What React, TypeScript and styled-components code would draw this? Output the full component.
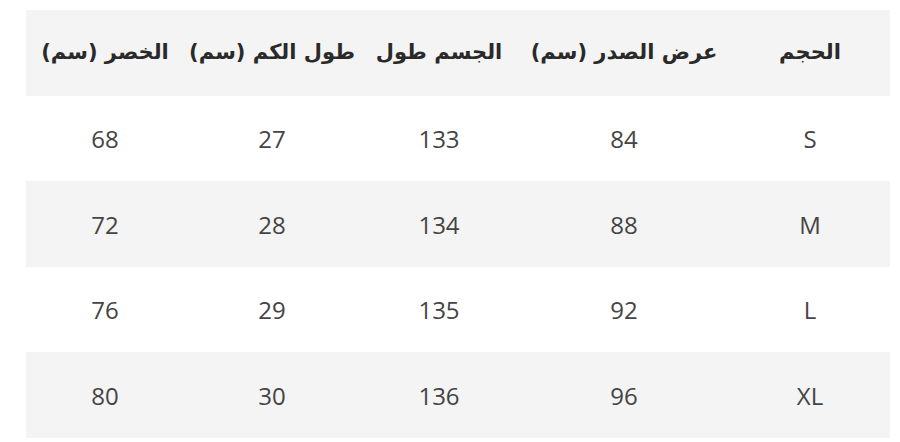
import React from "react";
import styled, { createGlobalStyle } from "styled-components";

const Global = createGlobalStyle`
  html, body { margin: 0; padding: 0; background: #ffffff; }
  body { font-family: "Open Sans", "DejaVu Sans", sans-serif; }
`;

const Page = styled.div`
  padding: 10px 10px 0 26px;
`;

const Table = styled.div`
  direction: rtl;
  width: 864px;
  display: grid;
  grid-template-columns: 160px 212px 158px 176px 158px;
`;

const Row = styled.div<{ $shade: boolean; $h: number }>`
  display: contents;
  & > div {
    background: ${(p) => (p.$shade ? "#f4f4f4" : "#ffffff")};
    height: ${(p) => p.$h}px;
  }
`;

const HeadCell = styled.div`
  display: flex;
  align-items: center;
  justify-content: center;
  font-family: "DejaVu Sans", "Noto Sans", sans-serif;
  font-weight: 700;
  font-size: 21px;
  color: #2a2a2a;
  white-space: nowrap;
  padding-bottom: 2px;
`;

const Cell = styled.div`
  display: flex;
  align-items: center;
  justify-content: center;
  font-family: "Open Sans", sans-serif;
  font-size: 24px;
  color: #444444;
  direction: ltr;
`;

const headers = ["الحجم", "عرض الصدر (سم)", "الجسم طول", "طول الكم (سم)", "الخصر (سم)"];
const rows = [
  ["S", "84", "133", "27", "68"],
  ["M", "88", "134", "28", "72"],
  ["L", "92", "135", "29", "76"],
  ["XL", "96", "136", "30", "80"],
];
const heights = [85, 86, 85, 86];

export default function App() {
  return (
    <>
      <Global />
      <Page>
        <Table>
          <Row $shade={true} $h={84}>
            {headers.map((h) => (
              <HeadCell key={h}>{h}</HeadCell>
            ))}
          </Row>
          {rows.map((r, i) => (
            <Row key={r[0]} $shade={i % 2 === 1} $h={heights[i]}>
              {r.map((v, j) => (
                <Cell key={j}>{v}</Cell>
              ))}
            </Row>
          ))}
        </Table>
      </Page>
    </>
  );
}
